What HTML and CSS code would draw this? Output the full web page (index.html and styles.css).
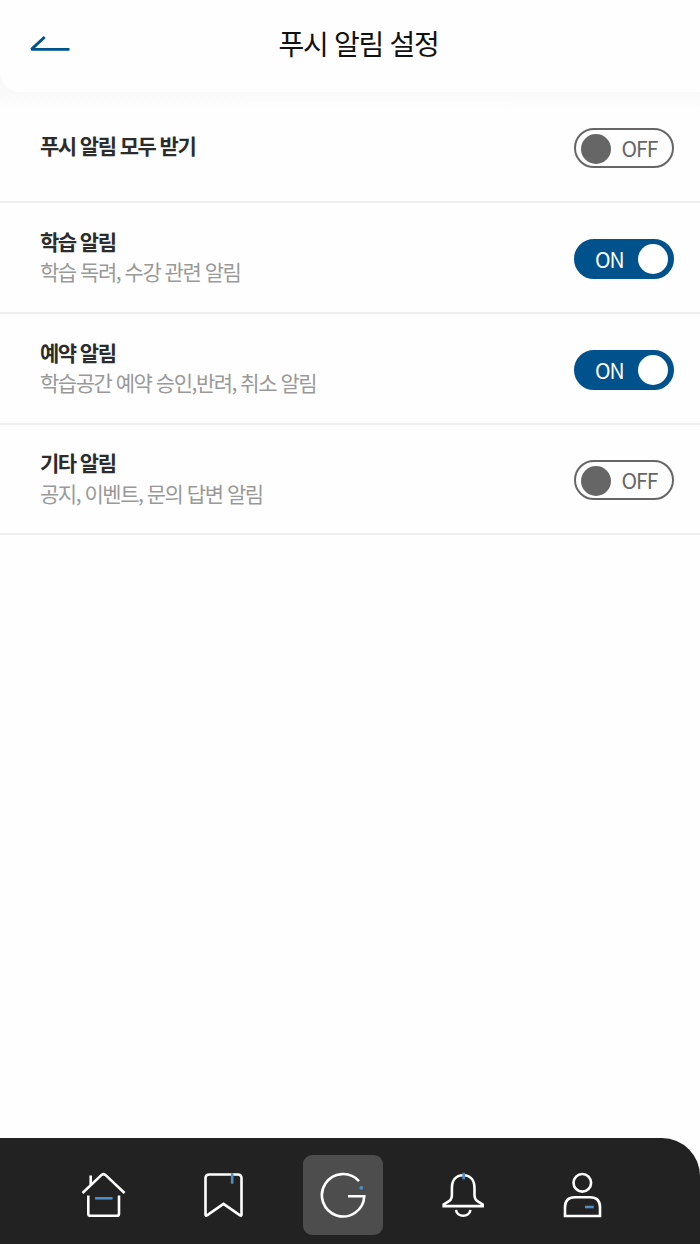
FILE: index.html
```html
<!DOCTYPE html>
<html lang="ko">
<head>
  <meta charset="UTF-8" />
  <meta name="viewport" content="width=device-width, initial-scale=1.0"/>
  <title>푸시 알림 설정</title>
  <link rel="stylesheet" href="styles.css">
</head>
<body>

  <div class="header-wrap">
    <header>
      <button class="back" aria-label="뒤로">
        <svg width="42" height="20" viewBox="0 0 42 20"><path d="M40.5 15.4H2.4L15.7 3" /></svg>
      </button>
      <h1>푸시 알림 설정</h1>
    </header>
  </div>

  <main>
    <ul class="settings">
      <li>
        <div class="text">
          <strong>푸시 알림 모두 받기</strong>
        </div>
        <button class="toggle"><i></i><span>OFF</span></button>
      </li>
      <li>
        <div class="text">
          <strong>학습 알림</strong>
          <p>학습 독려, 수강 관련 알림</p>
        </div>
        <button class="toggle on"><span>ON</span><i></i></button>
      </li>
      <li>
        <div class="text">
          <strong>예약 알림</strong>
          <p>학습공간 예약 승인,반려, 취소 알림</p>
        </div>
        <button class="toggle on"><span>ON</span><i></i></button>
      </li>
      <li>
        <div class="text">
          <strong>기타 알림</strong>
          <p>공지, 이벤트, 문의 답변 알림</p>
        </div>
        <button class="toggle"><i></i><span>OFF</span></button>
      </li>
    </ul>
  </main>

  <nav>
    <a href="#" aria-label="홈">
      <svg viewBox="0 0 48 48">
        <path d="M3.5 22 22.6 3.9Q24.5 2.4 26.4 3.9L45.5 22M11.7 14.5V4.5M9.3 24.5V42.7Q9.3 44.8 11.4 44.8H37.9Q40 44.8 40 42.7V24.5" />
        <path class="point" d="M16 27.3H33.6" />
      </svg>
    </a>
    <a href="#" aria-label="북마크">
      <svg viewBox="0 0 48 48">
        <path d="M6.5 7.3Q6.5 3.5 10.3 3.5H38.7Q42.5 3.5 42.5 7.3V43.7Q42.5 45.2 41 44.4L24.5 32.9 8 44.4Q6.5 45.2 6.5 43.7Z" />
        <path class="point" d="M33.2 2.2V12.7" />
      </svg>
    </a>
    <a href="#" class="active" aria-label="메인">
      <svg viewBox="0 0 48 48">
        <path d="M40 10.2A21.2 21.2 0 1 0 45.3 25.3H29" />
        <circle class="dot" cx="42.3" cy="16.8" r="1.9" />
      </svg>
    </a>
    <a href="#" aria-label="알림">
      <svg viewBox="0 0 48 48">
        <path d="M24.2 4.2C16.2 4.2 12.9 10.2 12.9 17.2V24.2C12.9 30.2 9.2 30.2 4.7 33.5V35.1H43.7V33.5C39.2 30.2 35.5 30.2 35.5 24.2V17.2C35.5 10.2 32.2 4.2 24.2 4.2ZM17 38.8C17.9 46.7 30.5 46.7 31.4 38.8" />
        <path class="point" d="M24.7 1.8V8.3" />
      </svg>
    </a>
    <a href="#" aria-label="내 정보">
      <svg viewBox="0 0 48 48">
        <circle cx="23.3" cy="11.8" r="8.8" />
        <path d="M6 45V36.2Q6 26.2 16 26.2H31Q41 26.2 41 36.2V45Z" />
        <path class="point" d="M26 36H34.8" />
      </svg>
    </a>
  </nav>

</body>
</html>
```

FILE: styles.css
```css
* {
  box-sizing: border-box;
}
body {
  display: flex;
  flex-direction: column;
  height: 1244px;
  margin: 0;
  font-family: 'Noto Sans CJK KR', sans-serif;
  background: #fefefe;
  overflow: hidden;
}
button {
  padding: 0;
  border: none;
  background: none;
  font-family: inherit;
  cursor: pointer;
}
.header-wrap {
  height: 108px;
  background: linear-gradient(#f9f9f9 92px, #fefefe);
}
header {
  display: grid;
  grid-template-columns: 72px 1fr 72px;
  align-items: center;
  height: 92px;
  padding-bottom: 5px;
  background: #fefefe;
  border-bottom-left-radius: 20px;
}
.back {
  height: 20px;
  padding-left: 29px;
}
.back svg {
  display: block;
  fill: none;
  stroke: #00528c;
  stroke-width: 2.9;
  stroke-linejoin: bevel;
}
h1 {
  margin: 0;
  padding: 0 0 2px 17px;
  font-size: 28px;
  font-weight: 400;
  line-height: 40px;
  letter-spacing: -1.25px;
  text-align: center;
  color: #111;
}
main {
  flex: 1;
}
.settings {
  margin: -15.4px 0 0;
  padding: 0;
  list-style: none;
}
.settings li {
  display: flex;
  align-items: center;
  justify-content: space-between;
  height: 110.7px;
  padding: 0 26px 0 40px;
  border-bottom: 2px solid #eee;
}
.text {
  padding-bottom: 2.5px;
  font-size: 21px;
  line-height: 30.5px;
  letter-spacing: -1.55px;
}
.text strong {
  display: block;
  font-weight: 700;
  color: #2c2c2c;
}
.text p {
  margin: 0;
  letter-spacing: -1.48px;
  color: #999;
}
.toggle {
  display: flex;
  align-items: center;
  width: 100px;
  height: 40px;
  margin-top: 2.6px;
  padding: 1px 4px 0 5px;
  border: 2px solid #666;
  border-radius: 20px;
  font-size: 21px;
  letter-spacing: -1px;
  color: #666;
}
.toggle i {
  width: 30px;
  height: 30px;
  border-radius: 50%;
  background: #666;
}
.toggle span {
  margin-left: 10.5px;
  padding-bottom: 1px;
  line-height: 30px;
}
.toggle.on {
  justify-content: space-between;
  border-color: #00528c;
  background: #00528c;
  color: #fff;
}
.toggle.on span {
  margin-left: 14px;
}
.toggle.on i {
  background: #fff;
}
nav {
  display: flex;
  justify-content: center;
  gap: 40px;
  height: 106px;
  padding: 17px 14px 0 0;
  background: #222;
  border-top-right-radius: 38px;
}
nav a {
  display: flex;
  align-items: center;
  justify-content: center;
  width: 80px;
  height: 80px;
  border-radius: 9px;
}
nav a.active {
  background: #4d4d4d;
}
nav svg {
  width: 48px;
  height: 48px;
  fill: none;
  stroke: #fff;
  stroke-width: 2.6;
}
nav .point {
  stroke: #4b8fc9;
}
nav .dot {
  fill: #4b8fc9;
  stroke: none;
}
```
